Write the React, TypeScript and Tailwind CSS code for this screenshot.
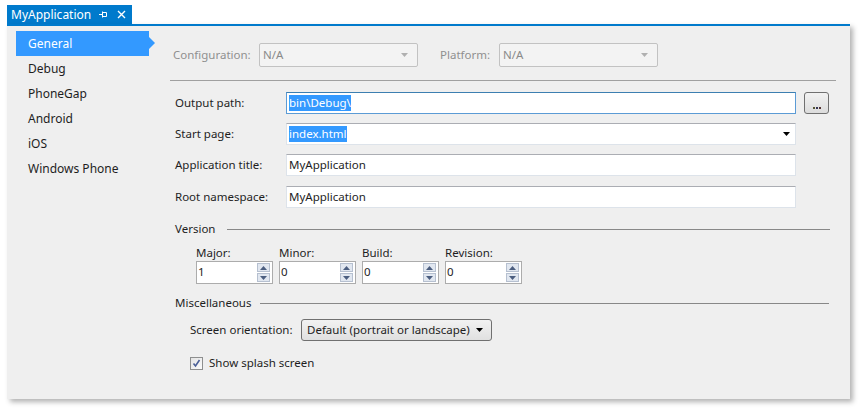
import React from 'react';

const font = "font-['Noto_Sans',sans-serif]";

const navItems = ['General', 'Debug', 'PhoneGap', 'Android', 'iOS', 'Windows Phone'];

const Caret = ({ color = '#000' }: { color?: string }) => (
    <svg width="7" height="4" viewBox="0 0 7 4">
        <path d="M0 0h7L3.5 4z" fill={color} />
    </svg>
);

const GraySelect = ({ width }: { width: string }) => (
    <div className={`${width} h-[24px] flex items-center justify-between px-[3px] pr-[9px] bg-[#f3f3f3] border border-[#c2c2c2] rounded-[2px] text-[#8a8a8a]`}>
        <span>N/A</span>
        <Caret color="#b0b0b0" />
    </div>
);

const Spin = ({ label, value }: { label: string; value: string }) => (
    <div className="flex flex-col w-[77px]">
        <span className="h-[15px] leading-[15px] mb-[1px]">{label}</span>
        <div className="h-[23px] flex items-stretch bg-white border border-[#acacac]">
            <span className="flex-1 leading-[20px] pl-[1px]">{value}</span>
            <div className="w-[16px] flex flex-col gap-[1px] p-[1px] pr-[2px]">
                <div className="flex-1 flex items-center justify-center bg-[#e1e7f0] border border-[#b6c0d0]">
                    <svg width="7" height="4" viewBox="0 0 7 4"><path d="M0 4h7L3.5 0z" fill="#4b5e80" /></svg>
                </div>
                <div className="flex-1 flex items-center justify-center bg-[#e1e7f0] border border-[#b6c0d0]">
                    <svg width="7" height="4" viewBox="0 0 7 4"><path d="M0 0h7L3.5 4z" fill="#4b5e80" /></svg>
                </div>
            </div>
        </div>
    </div>
);

const Field = ({ label, children, focused }: { label: string; children: React.ReactNode; focused?: boolean }) => (
    <div className="flex items-center h-[22px]">
        <span className="w-[116px] pl-[5px]">{label}</span>
        <div className={`w-[510px] h-[22px] flex items-center justify-between px-[2px] bg-white border ${focused ? 'border-[#5b9bd5] border-t-[#3c7fb1]' : 'border-[#dde3ea] border-t-[#abadb3]'}`}>
            {children}
        </div>
    </div>
);

const Selected = ({ text }: { text: string }) => (
    <span className="bg-[#3399ff] text-white leading-[16px]">{text}</span>
);

const Group = ({ title, line }: { title: string; line: string }) => (
    <div className="flex items-center h-[16px] pl-[5px]">
        <span>{title}</span>
        <div className={`${line} h-px bg-[#888]`} />
    </div>
);

export default function App() {
    return (
        <div className={`w-[863px] h-[414px] bg-white pt-[5px] pl-[7px] text-[11.5px] text-[#1e1e1e] ${font}`}>
            {/* document tab */}
            <div className="w-[125px] h-[19px] bg-[#007acc] text-white flex items-center pl-[4px]">
                <span className="leading-[18px] text-[12px]">MyApplication</span>
                <svg className="ml-[8px]" width="9" height="9" viewBox="0 0 9 9" fill="none" stroke="#fff" strokeWidth="1">
                    <path d="M0 4.5h3M3.5 1.5v6M3.5 2.5h4v4h-4" />
                </svg>
                <svg className="ml-[9px]" width="9" height="9" viewBox="0 0 9 9" stroke="#fff" strokeWidth="1.4">
                    <path d="M1 1l7 7M8 1L1 8" />
                </svg>
            </div>

            <div className="w-[843px] h-[375px] bg-[#efefef] border-t-2 border-[#007acc] shadow-[3px_3px_5px_rgba(0,0,0,0.3)] flex">
                {/* left navigation */}
                <nav className="w-[163px] pt-[5px] pl-[9px] flex flex-col text-[12px]">
                    {navItems.map((item, i) =>
                        i === 0 ? (
                            <div key={item} className="relative w-[133px] h-[25px] bg-[#3399ff] text-white flex items-center pl-[12px]">
                                {item}
                                <span className="absolute right-[-6px] top-[6px] w-0 h-0 border-y-[6px] border-y-transparent border-l-[6px] border-l-[#3399ff]" />
                            </div>
                        ) : (
                            <div key={item} className="h-[25px] flex items-center pl-[12px]">{item}</div>
                        )
                    )}
                </nav>

                {/* main form */}
                <div className="flex-1 pt-[17px] pr-[14px] flex flex-col">
                    <div className="flex items-center h-[24px] text-[#8f8f8f]">
                        <span className="w-[89px] pl-[3px]">Configuration:</span>
                        <GraySelect width="w-[159px]" />
                        <span className="ml-[22px] w-[59px]">Platform:</span>
                        <GraySelect width="w-[159px]" />
                    </div>

                    <div className="mt-[13px] h-px bg-[#a0a0a0]" />

                    <div className="mt-[11px] flex flex-col gap-[9px]">
                        <div className="flex items-center">
                            <Field label="Output path:" focused>
                                <Selected text="bin\Debug\" />
                            </Field>
                            <div className="ml-[8px] w-[25px] h-[22px] rounded-[3px] border border-[#707070] bg-gradient-to-b from-[#f2f2f2] to-[#dcdcdc] flex items-end justify-center pb-[4px]">
                                <span className="flex gap-[1px]">
                                    <i className="w-[2px] h-[2px] bg-[#553]" />
                                    <i className="w-[2px] h-[2px] bg-[#335]" />
                                    <i className="w-[2px] h-[2px] bg-[#533]" />
                                </span>
                            </div>
                        </div>
                        <Field label="Start page:">
                            <Selected text="index.html" />
                            <span className="mr-[3px]"><Caret /></span>
                        </Field>
                        <Field label="Application title:">
                            <span>MyApplication</span>
                        </Field>
                        <div className="mt-[1px]">
                            <Field label="Root namespace:">
                                <span>MyApplication</span>
                            </Field>
                        </div>
                    </div>

                    <div className="mt-[13px]">
                        <Group title="Version" line="ml-[12px] w-[603px]" />
                    </div>
                    <div className="mt-[8px] pl-[26px] flex gap-[6px]">
                        <Spin label="Major:" value="1" />
                        <Spin label="Minor:" value="0" />
                        <Spin label="Build:" value="0" />
                        <Spin label="Revision:" value="0" />
                    </div>

                    <div className="mt-[11px]">
                        <Group title="Miscellaneous" line="ml-[9px] w-[569px]" />
                    </div>
                    <div className="mt-[8px] pl-[20px] flex items-center h-[22px]">
                        <span className="w-[111px]">Screen orientation:</span>
                        <div className="w-[191px] h-[22px] rounded-[3px] border border-[#707070] bg-gradient-to-b from-[#f2f2f2] to-[#e0e0e0] flex items-center justify-between pl-[5px] pr-[8px]">
                            <span>Default (portrait or landscape)</span>
                            <Caret />
                        </div>
                    </div>
                    <div className="mt-[15px] pl-[20px] flex items-center h-[14px]">
                        <div className="w-[13px] h-[13px] border border-[#8e8f8f] bg-gradient-to-br from-[#e4e4e4] to-[#fbfbfb] flex items-center justify-center">
                            <svg width="9" height="9" viewBox="0 0 9 9" fill="none" stroke="#4a5f97" strokeWidth="1.6">
                                <path d="M1.5 4.5l2 2.5 4-6" />
                            </svg>
                        </div>
                        <span className="ml-[6px]">Show splash screen</span>
                    </div>
                </div>
            </div>
        </div>
    );
}
